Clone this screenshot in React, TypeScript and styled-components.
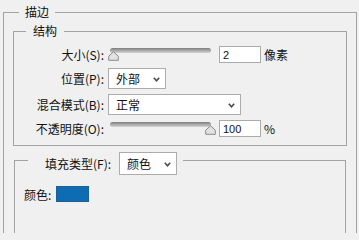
import styled, { createGlobalStyle } from "styled-components";

const GlobalStyle = createGlobalStyle`
  html, body {
    margin: 0;
    overflow: hidden;
    background: #f0f0f0;
  }
  body {
    font-family: "Noto Sans CJK SC", "Noto Sans", sans-serif;
    font-size: 12px;
    color: #111;
  }
`;

// the dialog is cut off at the bottom of the shot, so the page is clipped there
const Page = styled.div`
  box-sizing: border-box;
  padding: 5px 0 0 3px;
  width: 359px;
  height: 233px;
  overflow: hidden;
`;

const Group = styled.fieldset<{ $inset: number; $top: number; $width: number }>`
  box-sizing: border-box;
  width: ${(p) => p.$width}px;
  margin: ${(p) => p.$top}px 0 0 ${(p) => p.$inset}px;
  padding: 0;
  min-width: 0;
  border: 1px solid #a3a3a3;
`;

const Legend = styled.legend<{ $offset: number; $pad: string; $height?: number }>`
  margin-left: ${(p) => p.$offset}px;
  padding: ${(p) => p.$pad};
  height: ${(p) => p.$height ?? 14}px;
  line-height: 14px;
  font-size: 12px;
  color: #111;
`;

const OuterBody = styled.div`
  min-height: 230px;
`;

const StructureGrid = styled.div`
  display: grid;
  grid-template-columns: 90px auto;
  grid-template-rows: 17px 21px 21px 17px;
  column-gap: 4px;
  row-gap: 5px;
  padding: 8px 0 8px 0;
`;

const Label = styled.div`
  display: flex;
  align-items: center;
  justify-content: flex-end;
  white-space: nowrap;
`;

const Control = styled.div`
  display: flex;
  align-items: flex-start;
`;

const Slider = styled.div`
  position: relative;
  width: 104px;
  height: 17px;
  flex: none;
`;

const Track = styled.div`
  margin: 2px 0 0 2px;
  width: 101px;
  height: 5px;
  border-radius: 3px;
  background: linear-gradient(#7d7d7d, #a9a9a9 50%, #d4d4d4);
`;

const Thumb = styled.svg`
  position: absolute;
  top: 5px;
  width: 11px;
  height: 10px;
`;

const NumberField = styled.input`
  box-sizing: border-box;
  width: 42px;
  height: 17px;
  margin: 0 0 0 7px;
  padding: 0 0 0 3px;
  border: 1px solid #ababab;
  background: #fff;
  font-family: "Liberation Sans", Arial, sans-serif;
  font-size: 11px;
  color: #111;
  outline: none;
`;

const Unit = styled.span`
  margin-left: 3px;
  line-height: 17px;
  white-space: nowrap;
`;

const SelectBox = styled.div<{ $width: number; $height: number }>`
  box-sizing: border-box;
  display: flex;
  align-items: center;
  justify-content: space-between;
  width: ${(p) => p.$width}px;
  height: ${(p) => p.$height}px;
  padding: 0 5px 0 7px;
  border: 1px solid #acacac;
  background: #fff;
  white-space: nowrap;
`;

const Chevron = styled.svg`
  width: 7px;
  height: 5px;
  margin-top: 1px;
`;

const FillHeader = styled.div`
  display: flex;
  align-items: center;
  gap: 8px;
  height: 23px;
`;

const FillBody = styled.div`
  padding: 18px 0 0 9px;
  min-height: 80px;
`;

const ColorRow = styled.div`
  display: flex;
  align-items: center;
  gap: 5px;
  height: 16px;
`;

const Swatch = styled.div<{ $color: string }>`
  box-sizing: border-box;
  width: 33px;
  height: 16px;
  background: ${(p) => p.$color};
  border: 1px solid #1d5f93;
`;

function Select({ value, width, height = 21 }: { value: string; width: number; height?: number }) {
  return (
    <SelectBox $width={width} $height={height}>
      <span>{value}</span>
      <Chevron viewBox="0 0 7 5">
        <polyline points="0.8,0.8 3.5,3.8 6.2,0.8" fill="none" stroke="#4a4a4a" strokeWidth="1.6" />
      </Chevron>
    </SelectBox>
  );
}

function SliderField({ value, max, unit }: { value: number; max: number; unit: string }) {
  const left = Math.round((value / max) * 98) - 1;
  return (
    <Control>
      <Slider>
        <Track />
        <Thumb viewBox="0 0 11 10" style={{ left }}>
          <path
            d="M5.5 0.8 L10.3 5.2 L10.3 9.3 L0.7 9.3 L0.7 5.2 Z"
            fill="#e2e2e2"
            stroke="#8a8a8a"
            strokeWidth="1"
            strokeLinejoin="round"
          />
        </Thumb>
      </Slider>
      <NumberField readOnly value={String(value)} />
      <Unit>{unit}</Unit>
    </Control>
  );
}

function App() {
  return (
    <>
      <GlobalStyle />
      <Page>
        <Group $inset={0} $top={0} $width={354}>
          <Legend $offset={15} $pad="0 6px">描边</Legend>
          <OuterBody>
            <Group $inset={9} $top={5} $width={334}>
              <Legend $offset={12} $pad="0 7px">结构</Legend>
              <StructureGrid>
                <Label>大小(S):</Label>
                <SliderField value={2} max={250} unit="像素" />
                <Label>位置(P):</Label>
                <Control>
                  <Select value="外部" width={58} />
                </Control>
                <Label>混合模式(B):</Label>
                <Control>
                  <Select value="正常" width={133} />
                </Control>
                <Label>不透明度(O):</Label>
                <SliderField value={100} max={100} unit="%" />
              </StructureGrid>
            </Group>
            <Group $inset={10} $top={6} $width={332}>
              <Legend $offset={13} $pad="0 6px 0 17px" $height={16}>
                <FillHeader>
                  <span>填充类型(F):</span>
                  <Select value="颜色" width={58} height={23} />
                </FillHeader>
              </Legend>
              <FillBody>
                <ColorRow>
                  <span>颜色:</span>
                  <Swatch $color="#0e6cb5" />
                </ColorRow>
              </FillBody>
            </Group>
          </OuterBody>
        </Group>
      </Page>
    </>
  );
}

export default App;
